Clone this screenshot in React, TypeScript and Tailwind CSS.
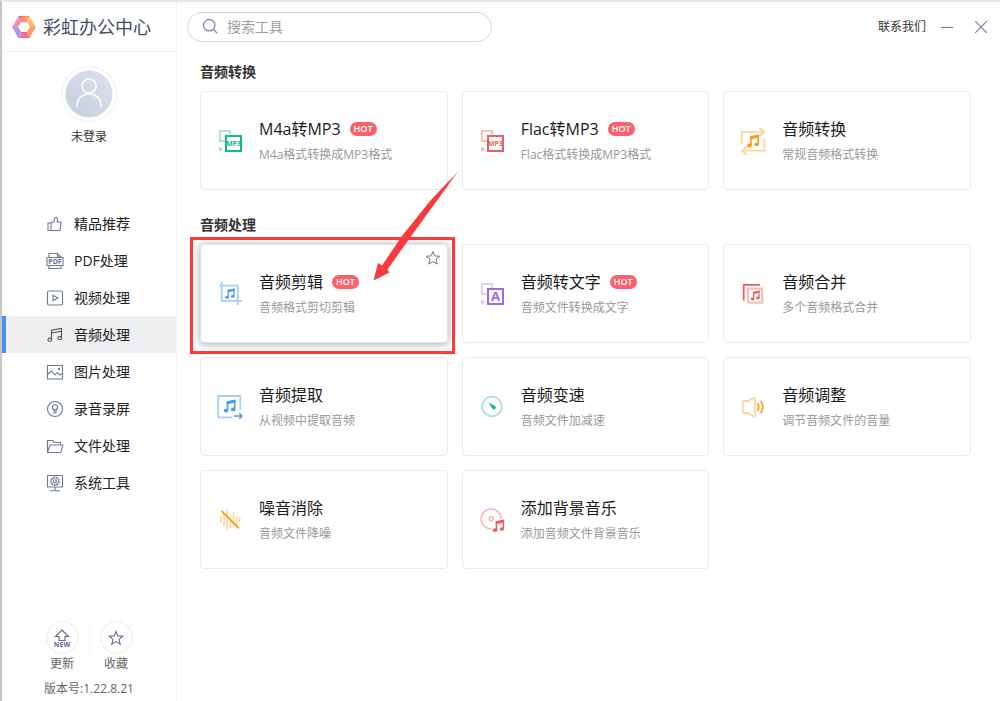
import React from 'react'

type Tool = {
  name: string
  desc: string
  icon: React.ReactNode
  hot?: boolean
  active?: boolean
}

// Two joined quavers, about 12 x 13 before scaling
const Note = ({ x, y, s = 1, color }: { x: number; y: number; s?: number; color: string }) => (
  <g transform={`translate(${x} ${y}) scale(${s})`}>
    <path d="M4 11V2.4L11.2 1V9.6" fill="none" stroke={color} strokeWidth="1.6" />
    <path d="M3.2 2L12 0V2.9L3.2 4.9Z" fill={color} />
    <ellipse cx="2.5" cy="11" rx="2.4" ry="1.9" fill={color} />
    <ellipse cx="9.7" cy="9.8" rx="2.3" ry="1.9" fill={color} />
  </g>
)

const ToolSvg = ({ children }: { children: React.ReactNode }) => (
  <svg width="29" height="29" viewBox="0 0 29 29" fill="none" className="shrink-0" aria-hidden="true">
    {children}
  </svg>
)

const BoxIcon = ({ light, dark, label, size }: { light: string; dark: string; label: string; size: number }) => (
  <ToolSvg>
    <path d="M9 15.2H3.8V4.8H14.2V9" stroke={light} strokeWidth="1.8" />
    <path d="M3 20.5L7.5 23.2L3 26Z" fill={light} />
    <rect x="10" y="10" width="15" height="15" stroke={dark} strokeWidth="2" />
    <text x="17.5" y={17.5 + size * 0.36} fontSize={size} fontWeight="700" textAnchor="middle" fill={dark}>
      {label}
    </text>
  </ToolSvg>
)

const ConvertIcon = () => (
  <ToolSvg>
    <path d="M2.8 17.5V5.8H25M20.5 1.5L25.3 5.8L20.5 10M25.5 12.5V24.7H3.5M8 20.3L3 24.7L8 29" stroke="#ffd699" strokeWidth="1.8" />
    <Note x={8} y={8.5} color="#fb9e1b" />
  </ToolSvg>
)

const CropIcon = () => (
  <ToolSvg>
    <path d="M5.7 3V21.8H26M3 6.6H21.8V26" stroke="#a8cffc" strokeWidth="1.8" />
    <Note x={9} y={9.5} s={0.8} color="#4e9bf7" />
  </ToolSvg>
)

const MergeIcon = () => (
  <ToolSvg>
    <path d="M4.7 21.5V5.8H21" stroke="#f05d5d" strokeWidth="1.8" />
    <rect x="9" y="9.6" width="14.2" height="14" stroke="#f9b9b9" strokeWidth="2" />
    <Note x={11.5} y={11.6} s={0.76} color="#f05d5d" />
  </ToolSvg>
)

const ExtractIcon = () => (
  <ToolSvg>
    <path d="M24.3 18V4H2.2V25.4H16.3" stroke="#a8cffc" strokeWidth="1.8" strokeLinejoin="round" />
    <path d="M18 24H26M23.3 21.4L26 24L23.3 26.6" stroke="#4e9bf7" strokeWidth="1.6" />
    <Note x={7.5} y={7.6} color="#4e9bf7" />
  </ToolSvg>
)

const SpeedIcon = () => (
  <ToolSvg>
    <circle cx="14" cy="14.5" r="9.8" stroke="#a5e5cb" strokeWidth="1.7" />
    <path d="M10.2 10.4L17.6 14.2Q18.3 17.6 15 17.6Z" fill="#10be7c" />
  </ToolSvg>
)

const VolumeIcon = () => (
  <ToolSvg>
    <path d="M4 9.8Q4 9 5 9H9L14.5 6Q16 5.5 16 7V23.5Q16 25 14.5 24.4L9 21H5Q4 21 4 20Z" stroke="#ffd699" strokeWidth="1.8" />
    <path d="M18.5 11.5Q20.8 15 18.5 18.7M21.6 9Q26 15 21.6 21.3" stroke="#fb9e1b" strokeWidth="1.8" />
  </ToolSvg>
)

const NoiseIcon = () => (
  <ToolSvg>
    <path d="M5 11V18M8 8V21M11.2 4V25M14.4 10V23M17.6 7V21M20.8 11V21M23.6 12V17" stroke="#ffd699" strokeWidth="1.6" />
    <path d="M5.5 6L23 23.3" stroke="#fb9e1b" strokeWidth="1.8" />
  </ToolSvg>
)

const DiscIcon = () => (
  <ToolSvg>
    <path d="M23.2 14A10 10 0 1 0 13.3 24" stroke="#f9b9b9" strokeWidth="1.7" />
    <circle cx="13.3" cy="13.7" r="2" stroke="#f9b9b9" strokeWidth="1.6" />
    <Note x={14.6} y={14.6} s={0.96} color="#f05d5d" />
  </ToolSvg>
)

const convertTools: Tool[] = [
  { name: 'M4a转MP3', desc: 'M4a格式转换成MP3格式', hot: true, icon: <BoxIcon light="#a5e5cb" dark="#10be7c" label="MP3" size={7} /> },
  { name: 'Flac转MP3', desc: 'Flac格式转换成MP3格式', hot: true, icon: <BoxIcon light="#f9b9b9" dark="#f05d5d" label="MP3" size={7} /> },
  { name: '音频转换', desc: '常规音频格式转换', icon: <ConvertIcon /> },
]

const processTools: Tool[] = [
  { name: '音频剪辑', desc: '音频格式剪切剪辑', hot: true, active: true, icon: <CropIcon /> },
  { name: '音频转文字', desc: '音频文件转换成文字', hot: true, icon: <BoxIcon light="#dccbfa" dark="#9b6be8" label="A" size={13} /> },
  { name: '音频合并', desc: '多个音频格式合并', icon: <MergeIcon /> },
  { name: '音频提取', desc: '从视频中提取音频', icon: <ExtractIcon /> },
  { name: '音频变速', desc: '音频文件加减速', icon: <SpeedIcon /> },
  { name: '音频调整', desc: '调节音频文件的音量', icon: <VolumeIcon /> },
  { name: '噪音消除', desc: '音频文件降噪', icon: <NoiseIcon /> },
  { name: '添加背景音乐', desc: '添加音频文件背景音乐', icon: <DiscIcon /> },
]

const navItems = [
  {
    name: '精品推荐',
    icon: <path d="M2 8H5V15.5H2ZM5 8L8 6.5L9 2.8Q11 1.8 11.3 4V7H15.2L14 15.5H5" />,
  },
  {
    name: 'PDF处理',
    icon: (
      <>
        <path d="M3 5.5V1.5H11.5L15 5V5.5M11.5 1.5V5H15M3 13.5V16.5H15V13.5M1 5.5H17V13.5H1Z" />
        <text x="9" y="12" fontSize="7" fontWeight="700" textAnchor="middle" fill="#5f6f8f" stroke="none">PDF</text>
      </>
    ),
  },
  {
    name: '视频处理',
    icon: (
      <>
        <rect x="1.5" y="2" width="15" height="14" rx="1.5" />
        <path d="M7 6.2L12 9L7 11.8Z" />
      </>
    ),
  },
  {
    name: '音频处理',
    active: true,
    icon: (
      <>
        <path d="M5.5 13.5V4.2L15.5 2.5V12M5.5 7L15.5 5.2" />
        <ellipse cx="3.8" cy="13.7" rx="1.9" ry="1.6" />
        <ellipse cx="13.7" cy="12.2" rx="1.9" ry="1.6" />
      </>
    ),
  },
  {
    name: '图片处理',
    icon: (
      <>
        <rect x="1.5" y="2.5" width="15" height="13.5" />
        <path d="M1.5 11.5L5.5 8L9 12L11.5 9.5L13.5 12L16.5 10.5" />
        <circle cx="13" cy="6" r=".6" />
      </>
    ),
  },
  {
    name: '录音录屏',
    icon: (
      <>
        <circle cx="9" cy="9" r="7.5" />
        <circle cx="9" cy="7.3" r="2.6" />
        <path d="M8 9.7V12.8H10V9.7" />
      </>
    ),
  },
  {
    name: '文件处理',
    icon: <path d="M1.5 15.5V3.5H6.5L8 5.5H14.5V8M1.5 15.5L4 8H16.8L14.8 15.5Z" />,
  },
  {
    name: '系统工具',
    icon: (
      <>
        <path d="M1.5 1.5H16.5V13H1.5ZM9 13V16.5M4 16.7H14" />
        <circle cx="9" cy="7.2" r="3.8" strokeWidth="1.8" strokeDasharray="2 .6" />
        <circle cx="9" cy="7.2" r="1.4" />
      </>
    ),
  },
]

const starPath = 'M8 1.5L9.9 5.9L14.7 6.3L11 9.4L12.2 14.1L8 11.6L3.8 14.1L5 9.4L1.3 6.3L6.1 5.9Z'

const Logo = () => (
  <svg width="24" height="24" viewBox="0 0 24 24" fill="none" aria-hidden="true">
    <defs>
      <linearGradient id="top" x1="0" x2="1">
        <stop offset="0" stopColor="#f2607f" />
        <stop offset="1" stopColor="#fba35d" />
      </linearGradient>
      <linearGradient id="right" x1="0" y1="0" x2="0" y2="1">
        <stop offset="0" stopColor="#fdc96a" />
        <stop offset="1" stopColor="#fbb070" />
      </linearGradient>
      <linearGradient id="bottom" x1="0" x2="1">
        <stop offset="0" stopColor="#e86fae" />
        <stop offset="1" stopColor="#f0566f" />
      </linearGradient>
      <linearGradient id="left" x1="0" y1="0" x2="0" y2="1">
        <stop offset="0" stopColor="#b78af0" />
        <stop offset="1" stopColor="#7389f2" />
      </linearGradient>
    </defs>
    <path d="M6.5 1H17.5L15 7H9Z" fill="url(#top)" />
    <path d="M17.5 1L23.7 12H18L15 7Z" fill="url(#right)" />
    <path d="M23.7 12L17.5 23L15 17L18 12Z" fill="#fb9e68" />
    <path d="M17.5 23H6.5L9 17H15Z" fill="url(#bottom)" />
    <path d="M6.5 23L.3 12H6L9 17Z" fill="url(#left)" />
    <path d="M.3 12L6.5 1L9 7L6 12Z" fill="#ee8ba6" />
    <path d="M7 3H18.5M8 5H19.5M6 19H16M6.5 21H17M2.2 12L7.6 21M4.2 12L8.4 19M2.2 12L7 3.2" stroke="#fff" strokeOpacity=".35" strokeWidth=".7" />
  </svg>
)

const ToolCard = ({ tool }: { tool: Tool }) => (
  <div className="relative">
    <button
      className={`flex h-[99px] w-full items-center gap-[14px] rounded border bg-white pl-[15px] text-left ${
        tool.active ? 'border-[#e4e4e4] shadow-[0_1px_7px_1px_rgba(0,0,0,0.28)]' : 'border-[#ebebeb]'
      }`}
    >
      {tool.icon}
      <span className="flex flex-col gap-1">
        <span className="flex items-center gap-[9px] text-base leading-6 text-[#1b1b1b]">
          {tool.name}
          {tool.hot && (
            <span className="rounded-full bg-[#fb6168] px-1 text-[9px] leading-[14px] font-semibold text-white">HOT</span>
          )}
        </span>
        <span className="text-xs leading-5 text-[#999]">{tool.desc}</span>
      </span>
    </button>

    {tool.active && (
      <>
        <button aria-label="收藏" className="absolute top-[6px] right-[7px]">
          <svg width="16" height="16" viewBox="0 0 16 16" fill="none" stroke="#6b7893" aria-hidden="true">
            <path d={starPath} />
          </svg>
        </button>
        {/* Marker frame and arrow */}
        <div className="pointer-events-none absolute -top-[7px] -right-[7px] -bottom-[11px] -left-[10px] z-10 border-3 border-[#fb3b3b]" />
        <svg className="pointer-events-none absolute -top-[76px] -right-[14px] z-20" width="92" height="116" viewBox="0 0 92 116" aria-hidden="true">
          <defs>
            <linearGradient id="tail" gradientUnits="userSpaceOnUse" x1="90" y1="1" x2="78" y2="17">
              <stop offset="0" stopColor="#fb3b3b" stopOpacity=".3" />
              <stop offset="1" stopColor="#fb3b3b" />
            </linearGradient>
          </defs>
          <path d="M90 1L40.5 69L17.5 101.5L19.5 104.5L3.5 112.5L8 95L12 97.5L32 68L60 33Z" fill="url(#tail)" />
        </svg>
      </>
    )}
  </div>
)

const Section = ({ title, tools }: { title: string; tools: Tool[] }) => (
  <section className="flex flex-col gap-[9px]">
    <h2 className="text-sm leading-5 font-bold text-[#333]">{title}</h2>
    <div className="grid grid-cols-3 gap-[14px]">
      {tools.map((tool) => (
        <ToolCard key={tool.name} tool={tool} />
      ))}
    </div>
  </section>
)

const Sidebar = () => (
  <aside className="flex w-[175px] shrink-0 flex-col border-r border-[#f2f2f2]">
    <div className="flex h-[50px] items-center gap-[7px] border-b border-[#f0f0f0] pl-[10px]">
      <Logo />
      <h1 className="text-lg leading-6 text-[#3f4a66]">彩虹办公中心</h1>
    </div>

    {/* User */}
    <div className="mt-[14px] flex flex-col items-center gap-[5px]">
      <button aria-label="未登录" className="flex size-14 items-center justify-center rounded-full border border-[#eceef6]">
        <svg width="48" height="48" viewBox="0 0 48 48" fill="none" aria-hidden="true">
          <defs>
            <linearGradient id="face" x1="0" y1="1" x2="1" y2="0">
              <stop offset="0" stopColor="#c3cede" />
              <stop offset="1" stopColor="#dde1ee" />
            </linearGradient>
          </defs>
          <circle cx="24" cy="24" r="23.5" fill="url(#face)" />
          <circle cx="24" cy="16" r="7" stroke="#fff" strokeWidth="1.6" />
          <path d="M12 36.5C12 19.5 36 19.5 36 36.5" stroke="#fff" strokeWidth="1.6" strokeLinecap="round" />
        </svg>
      </button>
      <span className="text-xs leading-5 text-[#333]">未登录</span>
    </div>

    {/* Menu */}
    <nav className="mt-[58px] flex flex-col">
      {navItems.map((item) => (
        <button
          key={item.name}
          className={`flex h-[37px] items-center gap-[10px] border-l-4 pl-10 text-sm text-[#222] ${
            item.active ? 'border-[#4a90fb] bg-[#eeeff1]' : 'border-transparent'
          }`}
        >
          <svg width="18" height="18" viewBox="0 0 18 18" fill="none" stroke={item.active ? '#555' : '#6f7c98'} strokeWidth="1.1" aria-hidden="true">
            {item.icon}
          </svg>
          {item.name}
        </button>
      ))}
    </nav>

    {/* Update and favourites */}
    <div className="mt-auto flex flex-col items-center gap-[9px] pb-1 text-xs leading-4 text-[#666]">
      <div className="flex justify-center gap-[10px]">
        <button className="flex flex-col items-center gap-0.5">
          <span className="flex size-[33px] items-center justify-center rounded-full border border-[#ececec]">
            <svg width="20" height="20" viewBox="0 0 20 20" fill="none" stroke="#5f6f8f" strokeWidth="1.2" aria-hidden="true">
              <path d="M10 2L16.5 8.5H13V12.5H7V8.5H3.5Z" />
              <text x="10" y="18.5" fontSize="7" fontWeight="700" textAnchor="middle" fill="#5f6f8f" stroke="none">NEW</text>
            </svg>
          </span>
          更新
        </button>
        <div className="h-10 w-px bg-[#f6f6f6]" />
        <button className="flex flex-col items-center gap-0.5">
          <span className="flex size-[33px] items-center justify-center rounded-full border border-[#ececec]">
            <svg width="16" height="16" viewBox="0 0 16 16" fill="none" stroke="#5f6f8f" strokeWidth="1.1" aria-hidden="true">
              <path d={starPath} />
            </svg>
          </span>
          收藏
        </button>
      </div>
      <p>版本号:1.22.8.21</p>
    </div>
  </aside>
)

const App = () => {
  return (
    <div className="flex min-h-screen border-t-2 border-l-2 border-t-[#e6e6e6] border-l-[#c6c6c6] bg-white font-['Open_Sans','Noto_Sans_CJK_SC',sans-serif]">
      <Sidebar />

      <main className="flex min-w-0 flex-1 flex-col">
        {/* Title bar */}
        <header className="flex h-[49px] items-center justify-between pr-[12px] pl-[10px]">
          <label className="flex h-[30px] w-[305px] items-center gap-2 rounded-full border border-[#d3d5dc] pl-[14px]">
            <svg width="17" height="17" viewBox="0 0 17 17" fill="none" stroke="#8290b0" strokeWidth="1.3" aria-hidden="true">
              <circle cx="7.2" cy="7.2" r="5.7" />
              <path d="M11.3 11.3L15.2 15.2" />
            </svg>
            <input type="text" aria-label="搜索工具" placeholder="搜索工具" className="min-w-0 flex-1 bg-transparent text-sm leading-5 outline-none placeholder:text-[#a0a0a0]" />
          </label>

          <div className="flex items-center">
            <a href="#" className="text-xs leading-4 text-[#333]">联系我们</a>
            <button aria-label="最小化" className="ml-[14px]">
              <svg width="14" height="14" viewBox="0 0 14 14" stroke="#77829c" strokeWidth="1.2" aria-hidden="true">
                <path d="M1 7.5H13" />
              </svg>
            </button>
            <button aria-label="关闭" className="ml-5">
              <svg width="14" height="14" viewBox="0 0 14 14" stroke="#77829c" strokeWidth="1.2" aria-hidden="true">
                <path d="M1.2 1.2L12.8 12.8M12.8 1.2L1.2 12.8" />
              </svg>
            </button>
          </div>
        </header>

        {/* Tools */}
        <div className="flex flex-col gap-[25px] pt-[11px] pr-[29px] pb-6 pl-[23px]">
          <Section title="音频转换" tools={convertTools} />
          <Section title="音频处理" tools={processTools} />
        </div>
      </main>
    </div>
  )
}

export default App
